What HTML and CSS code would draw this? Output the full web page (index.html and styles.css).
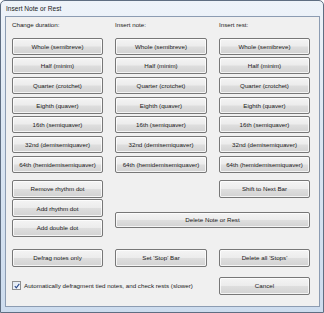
FILE: index.html
```html
<!DOCTYPE html>
<html lang="en">
<head>
  <meta charset="UTF-8" />
  <title>Insert Note or Rest</title>
  <link rel="stylesheet" href="styles.css">
</head>
<body>
<div class="window">
  <div class="titlebar">Insert Note or Rest</div>

  <div class="client">
    <!-- duration / note / rest columns -->
    <div class="grid-top">
      <div class="label">Change duration:</div>
      <div class="label">Insert note:</div>
      <div class="label">Insert rest:</div>

      <button class="btn">Whole (semibreve)</button>
      <button class="btn">Whole (semibreve)</button>
      <button class="btn">Whole (semibreve)</button>
      <button class="btn">Half (minim)</button>
      <button class="btn">Half (minim)</button>
      <button class="btn">Half (minim)</button>
      <button class="btn">Quarter (crotchet)</button>
      <button class="btn">Quarter (crotchet)</button>
      <button class="btn">Quarter (crotchet)</button>
      <button class="btn">Eighth (quaver)</button>
      <button class="btn">Eighth (quaver)</button>
      <button class="btn">Eighth (quaver)</button>
      <button class="btn">16th (semiquaver)</button>
      <button class="btn">16th (semiquaver)</button>
      <button class="btn">16th (semiquaver)</button>
      <button class="btn">32nd (demisemiquaver)</button>
      <button class="btn">32nd (demisemiquaver)</button>
      <button class="btn">32nd (demisemiquaver)</button>
      <button class="btn">64th (hemidemisemiquaver)</button>
      <button class="btn">64th (hemidemisemiquaver)</button>
      <button class="btn">64th (hemidemisemiquaver)</button>
    </div>

    <!-- dots / shift / delete -->
    <div class="middle">
      <div class="dots">
        <button class="btn tall">Remove rhythm dot</button>
        <button class="btn tall">Add rhythm dot</button>
        <button class="btn tall">Add double dot</button>
      </div>
      <div class="edit">
        <button class="btn tall shift">Shift to Next Bar</button>
        <button class="btn delete">Delete Note or Rest</button>
      </div>
    </div>

    <!-- bottom -->
    <div class="grid-bottom">
      <button class="btn tall">Defrag notes only</button>
      <button class="btn tall">Set 'Stop' Bar</button>
      <button class="btn tall">Delete all 'Stops'</button>

      <label class="check">
        <span class="box">
          <svg width="6" height="6" viewBox="0 0 6 6"><path d="M0.8 3.2 L2.3 4.8 L5.3 0.8" fill="none" stroke="#2a4a8c" stroke-width="1.1"/></svg>
        </span>
        Automatically defragment tied notes, and check rests (slower)
      </label>
      <button class="btn tall cancel">Cancel</button>
    </div>
  </div>
</div>
</body>
</html>
```

FILE: styles.css
```css
html, body {
  margin: 0;
  padding: 0;
  background: #ffffff;
}

.window {
  width: 324px;
  height: 313px;
  box-sizing: border-box;
  border: 1px solid #5f6e82;
  border-radius: 5px 5px 0 0;
  padding: 0 3px 5px 4px;
  background: linear-gradient(to bottom, #eef3f9 0%, #dce7f3 40%, #cddcee 100%);
  font-family: "Liberation Sans", Arial, sans-serif;
  color: #1a1a1a;
}

.titlebar {
  height: 15px;
  line-height: 15px;
  font-size: 6.6px;
  padding-left: 1px;
  color: #222;
}

.client {
  height: 291px;
  box-sizing: border-box;
  border: 1px solid #8c9cb2;
  background: #f0f0f0;
  padding: 3px 0 0 6px;
}

.grid-top,
.grid-bottom {
  display: grid;
  grid-template-columns: 91px 92px 91px;
  column-gap: 12px;
}

.grid-top {
  grid-template-rows: 15px repeat(7, 17px);
  row-gap: 2.7px;
}

.label {
  font-size: 6.2px;
  line-height: 10px;
}

.btn {
  box-sizing: border-box;
  margin: 0;
  padding: 0;
  height: 17px;
  width: 100%;
  border: 1px solid #777;
  border-radius: 2px;
  background: linear-gradient(to bottom, #f4f4f4 0%, #ececec 48%, #dedede 52%, #d2d2d2 100%);
  box-shadow: inset 0 0 0 1px rgba(255, 255, 255, 0.75);
  font-family: "Liberation Sans", Arial, sans-serif;
  font-size: 6.2px;
  color: #1a1a1a;
  white-space: nowrap;
}

.btn.tall {
  height: 18px;
}

.middle {
  display: flex;
  gap: 12px;
  margin-top: 7px;
}

.dots {
  width: 91px;
  display: flex;
  flex-direction: column;
  gap: 1.5px;
}

.edit {
  width: 195px;
  display: flex;
  flex-direction: column;
  align-items: flex-end;
}

.shift {
  width: 91px;
}

.delete {
  margin-top: 14px;
  height: 16px;
}

.grid-bottom {
  margin-top: 12px;
  grid-template-rows: 18px 18px;
  row-gap: 10px;
}

.check {
  grid-column: 1 / 3;
  display: flex;
  align-items: center;
  gap: 3px;
  font-size: 6.2px;
  white-space: nowrap;
}

.box {
  width: 7px;
  height: 7px;
  border: 1px solid #8e8f8f;
  background: linear-gradient(135deg, #dfe7f2, #f6f8fb);
  display: flex;
  align-items: center;
  justify-content: center;
}

.cancel {
  grid-column: 3;
}
```
